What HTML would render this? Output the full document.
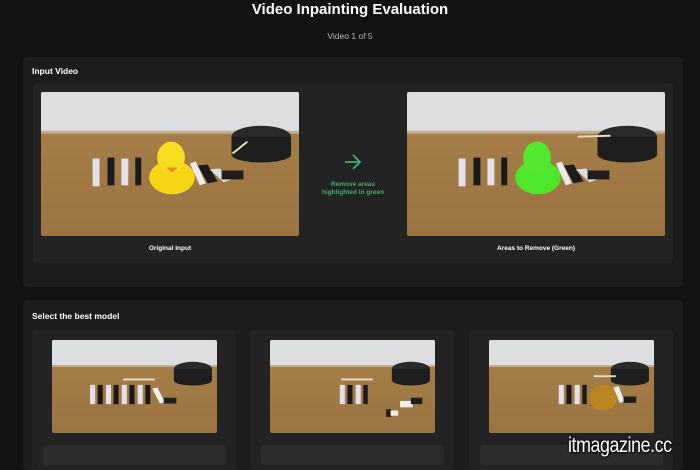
<!DOCTYPE html>
<html><head><meta charset="utf-8"><style>
*{margin:0;padding:0;box-sizing:border-box}
body{width:700px;height:461px;overflow:hidden;background:#121212;font-family:"Liberation Sans",sans-serif;color:#fff;position:relative}
.a{position:absolute}
.t{left:0;width:700px;text-align:center}
svg{position:absolute;display:block;border-radius:2px}
</style></head><body>
<svg width="0" height="0" style="position:absolute"><defs>
<linearGradient id="w" x1="0" y1="0" x2="0" y2="1"><stop offset="0" stop-color="#a98048"/><stop offset="1" stop-color="#9a7442"/></linearGradient>
<g id="base">
<rect width="260" height="145" fill="url(#w)"/>
<rect width="260" height="41" fill="#dcdee0"/>
<rect y="39" width="260" height="3" fill="#bfae90"/>
<ellipse cx="222" cy="45" rx="30" ry="11" fill="#2a2a2a"/>
<rect x="192" y="45" width="60" height="18" fill="#1e1e1e"/>
<ellipse cx="222" cy="63" rx="30" ry="8" fill="#1e1e1e"/>
</g>
</defs></svg>

<div class="a t" style="top:1px;font-size:15px;font-weight:bold">Video Inpainting Evaluation</div>
<div class="a t" style="top:31px;font-size:8.5px;color:#bbb">Video 1 of 5</div>

<div class="a" style="left:23px;top:57px;width:660px;height:230px;background:#1c1c1c;border-radius:5px"></div>
<div class="a" style="left:32px;top:66px;font-size:8.5px;font-weight:bold">Input Video</div>
<div class="a" style="left:33px;top:83px;width:640px;height:180px;background:#232323;border-radius:4px"></div>

<svg style="left:41px;top:92px" width="258" height="144" viewBox="0 0 260 145" preserveAspectRatio="none">
<use href="#base"/>
<line x1="193" y1="62" x2="208" y2="50" stroke="#e8dcc0" stroke-width="2"/>
<rect x="52" y="67" width="7" height="28" fill="#e4e0ea"/><rect x="67" y="66" width="7" height="28" fill="#1a1a1a"/>
<rect x="81" y="67" width="7" height="27" fill="#e4e0ea"/><rect x="95" y="66" width="6" height="28" fill="#1a1a1a"/>
<ellipse cx="132" cy="86" rx="23" ry="17" fill="#f7d616"/><ellipse cx="131" cy="66" rx="14" ry="16" fill="#f8dc20"/>
<path d="M126 76 L138 76 L132 81Z" fill="#f08a18"/>
<polygon points="150,72 156,70 166,92 160,94" fill="#ece8ee"/><polygon points="158,74 168,73 178,90 168,92" fill="#1c1c1c"/>
<polygon points="170,78 180,77 192,88 184,91" fill="#ddd"/><rect x="182" y="79" width="22" height="9" fill="#1e1e1e"/>
</svg>
<svg style="left:407px;top:92px" width="258" height="144" viewBox="0 0 260 145" preserveAspectRatio="none">
<use href="#base"/>
<line x1="172" y1="45" x2="205" y2="44" stroke="#e8dcc0" stroke-width="2"/>
<rect x="52" y="67" width="7" height="28" fill="#e4e0ea"/><rect x="67" y="66" width="7" height="28" fill="#1a1a1a"/>
<rect x="81" y="67" width="7" height="27" fill="#e4e0ea"/><rect x="95" y="66" width="6" height="28" fill="#1a1a1a"/>
<ellipse cx="132" cy="86" rx="23" ry="17" fill="#4de62a"/><ellipse cx="131" cy="66" rx="14" ry="16" fill="#52e82e"/>
<polygon points="150,72 156,70 166,92 160,94" fill="#ece8ee"/><polygon points="158,74 168,73 178,90 168,92" fill="#1c1c1c"/>
<polygon points="170,78 180,77 192,88 184,91" fill="#ddd"/><rect x="182" y="79" width="22" height="9" fill="#1e1e1e"/>
</svg>

<svg style="left:344px;top:154px" width="18" height="16" viewBox="0 0 18 16"><path d="M1 8 H16 M9 1 L16 8 L9 15" fill="none" stroke="#3fae6e" stroke-width="1.8"/></svg>
<div class="a" style="left:313px;top:181px;width:80px;text-align:center;font-size:6.5px;line-height:8px;color:#3fae6e;font-weight:bold">Remove areas<br>highlighted in green</div>
<div class="a" style="left:41px;top:245px;width:258px;text-align:center;font-size:6.5px;font-weight:bold">Original Input</div>
<div class="a" style="left:407px;top:245px;width:258px;text-align:center;font-size:6.5px;font-weight:bold">Areas to Remove (Green)</div>

<div class="a" style="left:23px;top:300px;width:660px;height:170px;background:#1c1c1c;border-radius:5px"></div>
<div class="a" style="left:32px;top:311px;font-size:8.5px;font-weight:bold">Select the best model</div>

<div class="a" style="left:32px;top:330px;width:204px;height:140px;background:#232323;border-radius:4px"></div>
<div class="a" style="left:250px;top:330px;width:204px;height:140px;background:#232323;border-radius:4px"></div>
<div class="a" style="left:469px;top:330px;width:204px;height:140px;background:#232323;border-radius:4px"></div>
<div class="a" style="left:43px;top:445px;width:183px;height:20px;background:#2c2c2c;border-radius:3px"></div>
<div class="a" style="left:261px;top:445px;width:183px;height:20px;background:#2c2c2c;border-radius:3px"></div>
<div class="a" style="left:480px;top:445px;width:183px;height:20px;background:#2c2c2c;border-radius:3px"></div>

<svg style="left:52px;top:340px" width="165" height="93" viewBox="0 0 260 145" preserveAspectRatio="none">
<use href="#base"/>
<rect x="112" y="60" width="50" height="3" fill="#e8dcc0"/>
<g fill="#e4e0ea"><rect x="60" y="70" width="8" height="30"/><rect x="85" y="70" width="8" height="30"/><rect x="110" y="70" width="8" height="30"/><rect x="135" y="70" width="8" height="30"/></g>
<g fill="#1a1a1a"><rect x="72" y="70" width="8" height="30"/><rect x="97" y="70" width="8" height="30"/><rect x="122" y="70" width="8" height="30"/><rect x="147" y="70" width="8" height="30"/></g>
<polygon points="158,76 166,74 178,97 170,99" fill="#eee"/><rect x="176" y="90" width="20" height="9" fill="#1e1e1e"/>
</svg>
<svg style="left:270px;top:340px" width="165" height="93" viewBox="0 0 260 145" preserveAspectRatio="none">
<use href="#base"/>
<rect x="112" y="60" width="50" height="3" fill="#e8dcc0"/>
<g fill="#e4e0ea"><rect x="110" y="70" width="8" height="30"/><rect x="135" y="70" width="8" height="30"/></g>
<g fill="#1a1a1a"><rect x="122" y="70" width="8" height="30"/><rect x="147" y="70" width="7" height="30"/></g>
<rect x="183" y="108" width="8" height="12" fill="#2a1a14"/><rect x="190" y="110" width="12" height="8" fill="#eee"/>
<rect x="205" y="95" width="20" height="10" fill="#eee"/><rect x="222" y="90" width="18" height="10" fill="#1e1e1e"/>
</svg>
<svg style="left:489px;top:340px" width="165" height="93" viewBox="0 0 260 145" preserveAspectRatio="none">
<use href="#base"/>
<rect x="165" y="55" width="35" height="3" fill="#e8dcc0"/>
<g fill="#e4e0ea"><rect x="110" y="70" width="8" height="30"/><rect x="135" y="70" width="8" height="30"/></g>
<g fill="#1a1a1a"><rect x="122" y="70" width="8" height="30"/><rect x="147" y="70" width="7" height="30"/></g>
<ellipse cx="180" cy="90" rx="22" ry="20" fill="#c08a18" opacity=".8"/>
<polygon points="196,74 204,72 214,96 206,98" fill="#eee"/><rect x="212" y="88" width="20" height="10" fill="#1e1e1e"/>
</svg>

<div class="a" style="left:568px;top:434px;font-size:21px;color:#fff;letter-spacing:-0.5px;transform:scaleX(.85);transform-origin:left;text-shadow:0 0 3px #000,1px 1px 2px #000">itmagazine.cc</div>
</body></html>
